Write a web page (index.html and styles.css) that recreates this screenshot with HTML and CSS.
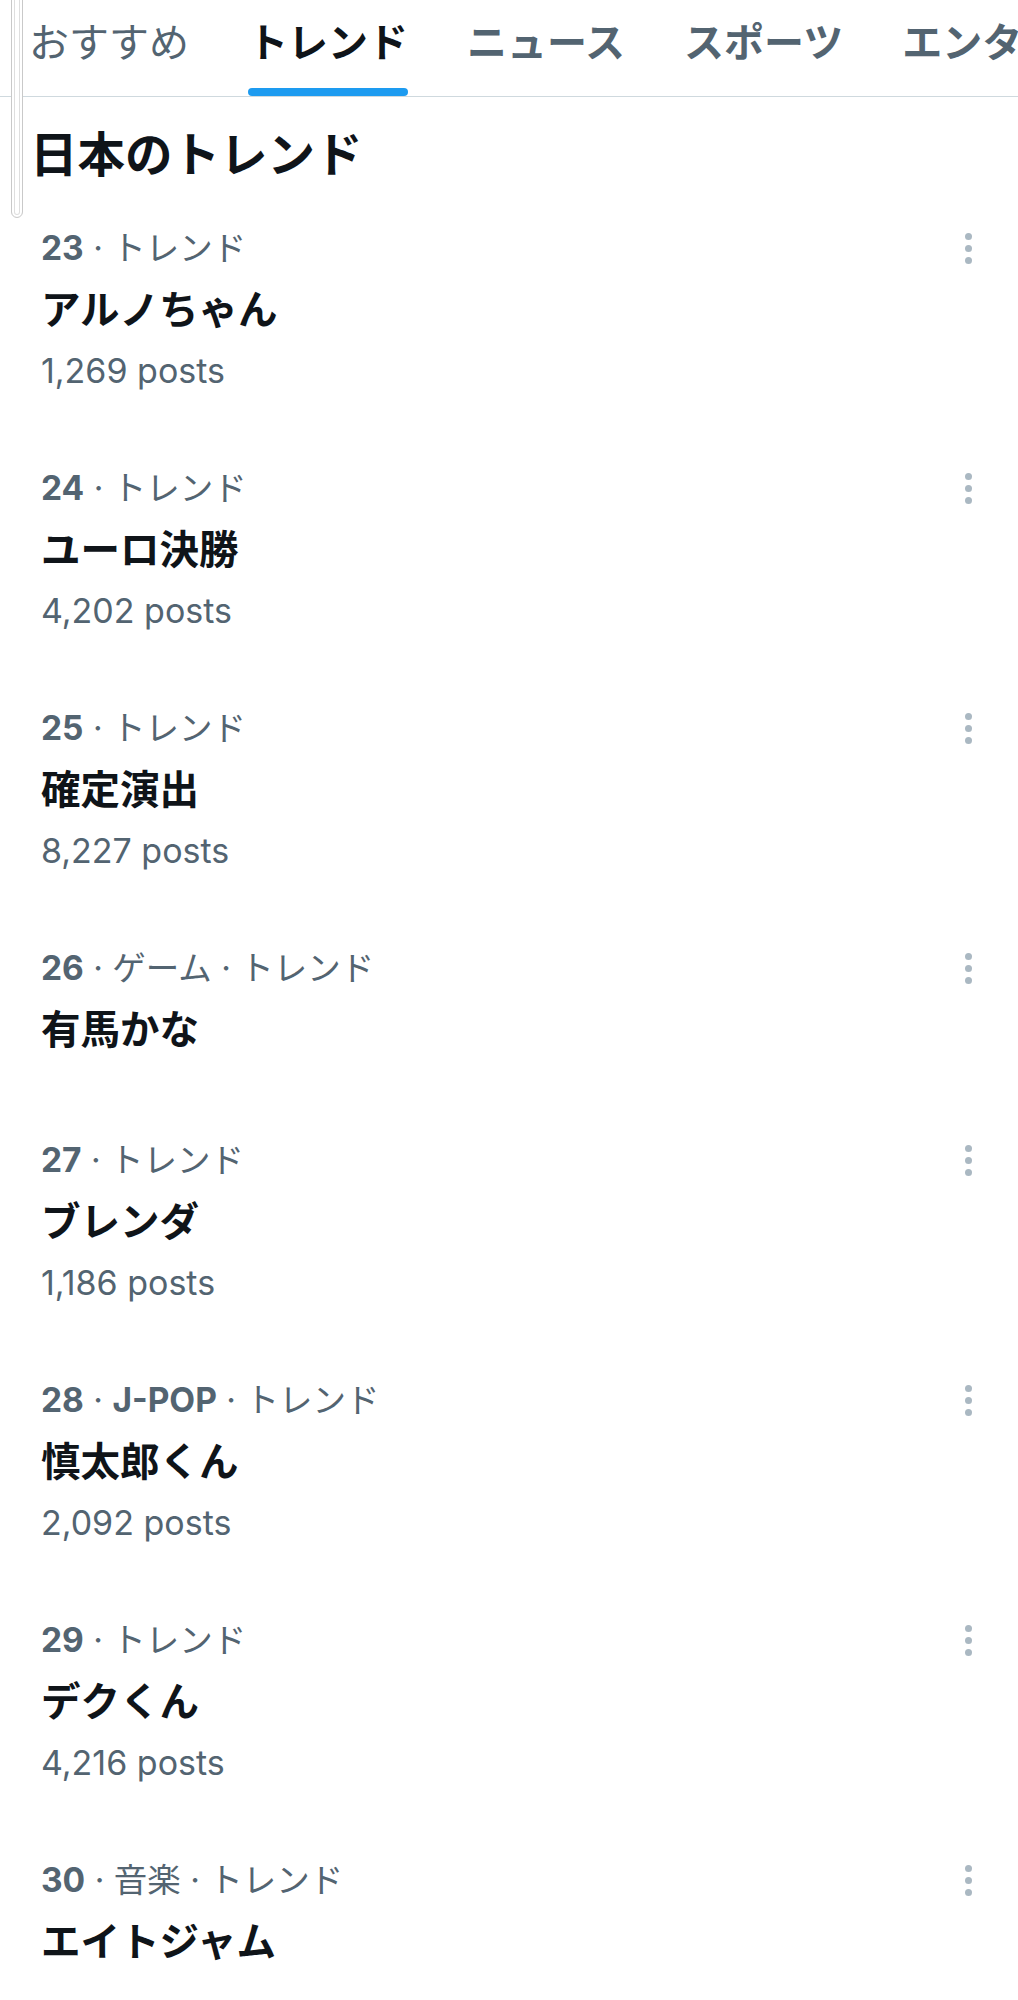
FILE: index.html
```html
<!DOCTYPE html>
<html lang="ja">
<head>
<meta charset="utf-8">
<title>日本のトレンド</title>
<link rel="stylesheet" href="styles.css">
</head>
<body>
<div class="page">
  <div class="scroll-thumb"></div>
  <nav class="tabs">
    <div class="tab tab--light"><span class="tab-label">おすすめ</span><span class="tab-bar"></span></div>
    <div class="tab tab--active"><span class="tab-label">トレンド</span><span class="tab-bar"></span></div>
    <div class="tab"><span class="tab-label">ニュース</span><span class="tab-bar"></span></div>
    <div class="tab"><span class="tab-label">スポーツ</span><span class="tab-bar"></span></div>
    <div class="tab"><span class="tab-label">エンタメ</span><span class="tab-bar"></span></div>
  </nav>

  <h2 class="section-title">日本のトレンド</h2>

  <ul class="trends">
    <li class="trend">
      <div class="trend-body">
        <div class="trend-meta"><b>23</b> · トレンド</div>
        <div class="trend-name">アルノちゃん</div>
        <div class="trend-count">1,269 posts</div>
      </div>
      <div class="more"><i></i><i></i><i></i></div>
    </li>
    <li class="trend">
      <div class="trend-body">
        <div class="trend-meta"><b>24</b> · トレンド</div>
        <div class="trend-name">ユーロ決勝</div>
        <div class="trend-count">4,202 posts</div>
      </div>
      <div class="more"><i></i><i></i><i></i></div>
    </li>
    <li class="trend">
      <div class="trend-body">
        <div class="trend-meta"><b>25</b> · トレンド</div>
        <div class="trend-name">確定演出</div>
        <div class="trend-count">8,227 posts</div>
      </div>
      <div class="more"><i></i><i></i><i></i></div>
    </li>
    <li class="trend trend--short">
      <div class="trend-body">
        <div class="trend-meta"><b>26</b> · ゲーム · トレンド</div>
        <div class="trend-name">有馬かな</div>
      </div>
      <div class="more"><i></i><i></i><i></i></div>
    </li>
    <li class="trend">
      <div class="trend-body">
        <div class="trend-meta"><b>27</b> · トレンド</div>
        <div class="trend-name">ブレンダ</div>
        <div class="trend-count">1,186 posts</div>
      </div>
      <div class="more"><i></i><i></i><i></i></div>
    </li>
    <li class="trend">
      <div class="trend-body">
        <div class="trend-meta"><b>28</b> · <b>J-POP</b> · トレンド</div>
        <div class="trend-name">慎太郎くん</div>
        <div class="trend-count">2,092 posts</div>
      </div>
      <div class="more"><i></i><i></i><i></i></div>
    </li>
    <li class="trend">
      <div class="trend-body">
        <div class="trend-meta"><b>29</b> · トレンド</div>
        <div class="trend-name">デクくん</div>
        <div class="trend-count">4,216 posts</div>
      </div>
      <div class="more"><i></i><i></i><i></i></div>
    </li>
    <li class="trend">
      <div class="trend-body">
        <div class="trend-meta"><b>30</b> · 音楽 · トレンド</div>
        <div class="trend-name">エイトジャム</div>
      </div>
      <div class="more"><i></i><i></i><i></i></div>
    </li>
  </ul>
</div>
</body>
</html>
```

FILE: styles.css
```css
* {
  box-sizing: border-box;
}

html, body {
  margin: 0;
  padding: 0;
  background: #ffffff;
}

body {
  font-family: "Inter", "Noto Sans CJK JP", sans-serif;
  color: #0f1419;
  overflow: hidden;
}

.page {
  position: relative;
  width: 1018px;
}

.scroll-thumb {
  position: absolute;
  left: 11px;
  top: -12px;
  width: 12px;
  height: 230px;
  border: 1px solid #c9c9c9;
  border-radius: 6px;
  background: #ffffff;
  box-shadow: inset 0 0 0 2px #ffffff, inset 0 0 0 3px #dedede;
  z-index: 2;
}

/* Tabs */
.tabs {
  display: flex;
  gap: 59px;
  height: 97px;
  padding-left: 29px;
  border-bottom: 1px solid #cfd9de;
  white-space: nowrap;
  overflow: hidden;
}

.tab {
  display: flex;
  flex-direction: column;
  align-items: stretch;
  flex: none;
}

.tab-label {
  font-family: "Noto Sans CJK JP", sans-serif;
  font-size: 40px;
  line-height: 52px;
  margin-top: 14px;
  font-weight: 700;
  color: #536471;
}

.tab--light .tab-label {
  font-weight: 400;
}

.tab--active .tab-label {
  color: #0f1419;
}

.tab-bar {
  margin-top: auto;
  margin-bottom: 0;
  height: 8px;
  border-radius: 4px;
  background: transparent;
}

.tab--active .tab-bar {
  background: #1d9bf0;
}

/* Section title */
.section-title {
  margin: 0;
  padding: 27px 0 10px 30px;
  font-family: "Noto Sans CJK JP", sans-serif;
  font-size: 47.5px;
  line-height: 56px;
  font-weight: 700;
  color: #0f1419;
}

/* Trends */
.trends {
  list-style: none;
  margin: 0;
  padding: 0;
}

.trend {
  display: flex;
  align-items: flex-start;
  padding: 36px 35px 37px 41px;
}

.trend--short {
  padding-bottom: 46px;
}

.trend-body {
  flex: 1;
  min-width: 0;
}

.trend-meta {
  font-size: 33.5px;
  line-height: 44px;
  font-weight: 400;
  color: #536471;
}

.trend-meta b {
  font-weight: 700;
}

.trend-name {
  margin-top: 14px;
  font-size: 39.5px;
  line-height: 52px;
  font-weight: 700;
  color: #0f1419;
}

.trend-count {
  margin-top: 13px;
  font-size: 34px;
  line-height: 44px;
  font-weight: 400;
  color: #536471;
}

.more {
  width: 30px;
  height: 44px;
  display: flex;
  flex-direction: column;
  align-items: center;
  justify-content: center;
  gap: 5px;
}

.more i {
  display: block;
  width: 7px;
  height: 7px;
  border-radius: 50%;
  background: #aab8c2;
}
```
